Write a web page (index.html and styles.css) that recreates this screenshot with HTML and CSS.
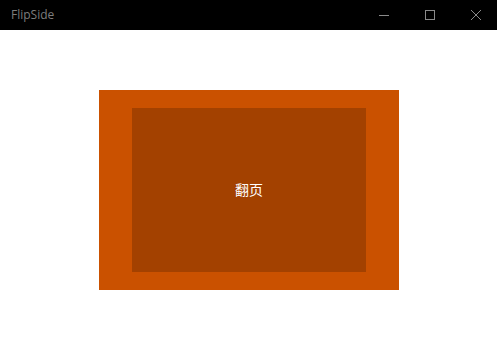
FILE: index.html
```html
<!DOCTYPE html>
<html>
<head>
<meta charset="utf-8">
<link rel="stylesheet" href="styles.css">
</head>
<body>
<div class="window">
  <div class="titlebar">
    <span class="title">FlipSide</span>
    <div class="controls">
      <span class="ctl"><svg width="10" height="10" viewBox="0 0 10 10"><path d="M0 5.5H10" stroke="#8a8a8a" stroke-width="1"/></svg></span>
      <span class="ctl"><svg width="10" height="10" viewBox="0 0 10 10"><rect x="0.5" y="0.5" width="9" height="9" fill="none" stroke="#8a8a8a" stroke-width="1"/></svg></span>
      <span class="ctl"><svg width="10" height="10" viewBox="0 0 10 10"><path d="M0 0L10 10M10 0L0 10" stroke="#8a8a8a" stroke-width="1"/></svg></span>
    </div>
  </div>
  <div class="content">
    <div class="card">
      <div class="inner"><span class="label">翻页</span></div>
    </div>
  </div>
</div>
</body>
</html>
```
FILE: styles.css
```css
html, body {
  margin: 0;
  padding: 0;
  background: #fff;
}
.window {
  width: 497px;
  height: 348px;
  display: flex;
  flex-direction: column;
  overflow: hidden;
}
.titlebar {
  height: 30px;
  background: #000;
  display: flex;
  align-items: center;
  justify-content: space-between;
  flex-shrink: 0;
}
.title {
  font-family: "Open Sans", "Noto Sans", sans-serif;
  font-size: 12px;
  color: #7d7d7d;
  padding-left: 11px;
  margin-top: -1px;
}
.controls {
  display: flex;
  height: 30px;
  margin-right: -2px;
}
.ctl {
  width: 46px;
  height: 30px;
  display: flex;
  align-items: center;
  justify-content: center;
}
.ctl svg {
  display: block;
}
.content {
  flex: 1;
  display: flex;
  align-items: center;
  justify-content: center;
  padding-left: 1px;
  padding-top: 1px;
}
.card {
  width: 300px;
  height: 200px;
  background: #ca5100;
  display: flex;
  align-items: center;
  justify-content: center;
}
.inner {
  width: 234px;
  height: 164px;
  background: #a34100;
  display: flex;
  align-items: center;
  justify-content: center;
}
.label {
  font-family: "Noto Sans CJK SC", sans-serif;
  font-size: 14px;
  color: #fff;
  margin-top: -2px;
}
```
